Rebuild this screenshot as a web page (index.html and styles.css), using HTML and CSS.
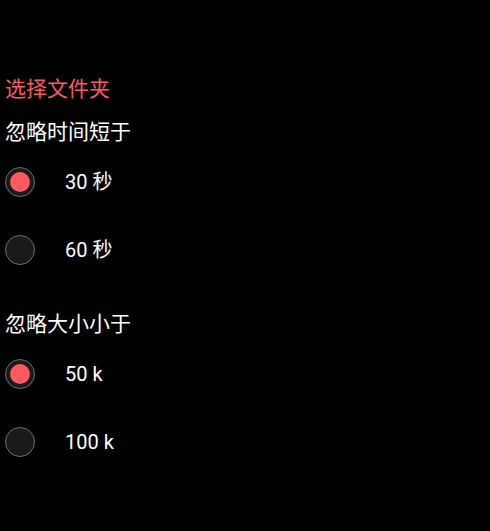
FILE: index.html
```html
<!DOCTYPE html>
<html lang="zh">
<head>
<meta charset="utf-8">
<link rel="stylesheet" href="styles.css">
</head>
<body>
<div class="page">
  <div class="title">选择文件夹</div>

  <div class="section-head">忽略时间短于</div>
  <div class="option">
    <span class="radio checked"><span class="dot"></span></span>
    <span class="label">30 秒</span>
  </div>
  <div class="option">
    <span class="radio"></span>
    <span class="label">60 秒</span>
  </div>

  <div class="section-head second">忽略大小小于</div>
  <div class="option">
    <span class="radio checked"><span class="dot"></span></span>
    <span class="label">50 k</span>
  </div>
  <div class="option">
    <span class="radio"></span>
    <span class="label">100 k</span>
  </div>
</div>
</body>
</html>
```
FILE: styles.css
```css
html, body {
  margin: 0;
  padding: 0;
  background: #000;
}
body {
  width: 490px;
  height: 531px;
  overflow: hidden;
  font-family: Roboto, "Noto Sans CJK SC", sans-serif;
  color: #fff;
}
.page {
  display: flex;
  flex-direction: column;
  padding: 71px 0 0 5px;
}
.title {
  font-family: "Noto Sans CJK SC", sans-serif;
  font-size: 21px;
  line-height: 32px;
  color: #ff5a5f;
}
.section-head {
  font-family: "Noto Sans CJK SC", sans-serif;
  font-size: 21px;
  line-height: 32px;
  margin-top: 11px;
  margin-bottom: 2px;
}
.section-head.second {
  margin-top: 22px;
}
.option {
  display: flex;
  align-items: center;
  height: 68px;
}
.radio {
  box-sizing: border-box;
  width: 30px;
  height: 30px;
  border-radius: 50%;
  border: 1px solid #6e6e6e;
  background: #1a1a1a;
  display: flex;
  align-items: center;
  justify-content: center;
  flex: none;
}
.dot {
  width: 20px;
  height: 20px;
  border-radius: 50%;
  background: #ff5a5f;
}
.label {
  margin-left: 30px;
  font-size: 20px;
  line-height: 24px;
}
```
